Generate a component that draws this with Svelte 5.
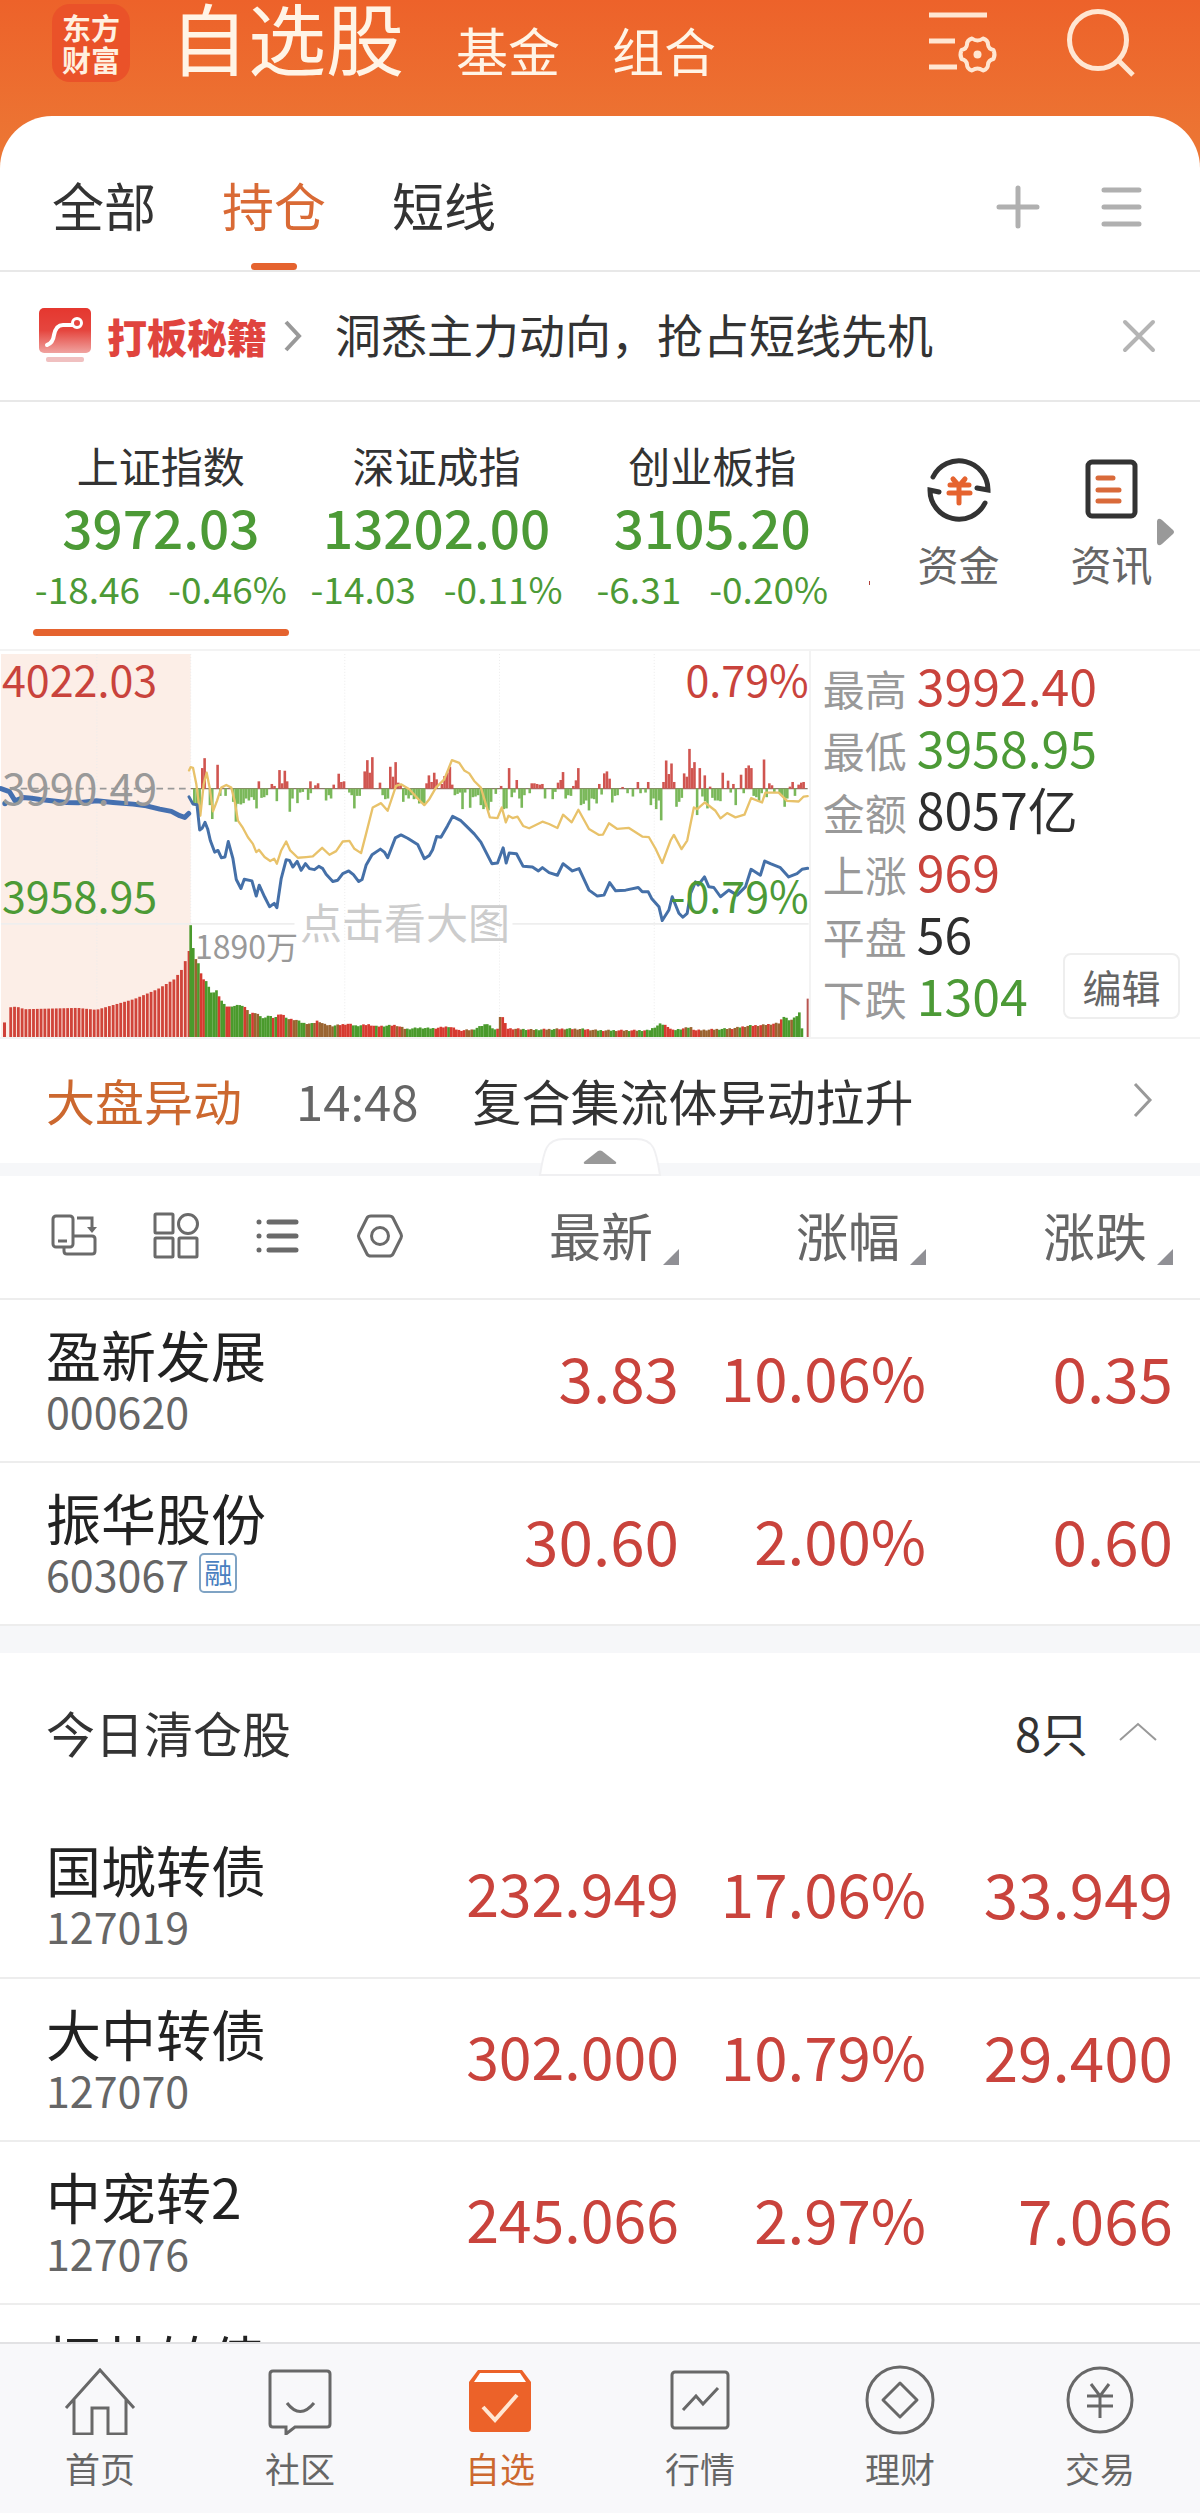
<script lang="ts">
  type Tone = 'up' | 'down' | 'flat';

  interface Stock {
    name: string;
    code: string;
    price: string;
    percent: string;
    change: string;
    margin?: boolean;
  }

  const markets = ['自选股', '基金', '组合'];
  const groups = ['全部', '持仓', '短线'];
  const columns = ['最新', '涨幅', '涨跌'];

  let market = $state('自选股');
  let group = $state('持仓');
  let activeIndex = $state('上证指数');
  let activeNav = $state('自选');
  let showBanner = $state(true);
  let showCleared = $state(true);

  const indices = [
    { name: '上证指数', value: '3972.03', change: '-18.46', percent: '-0.46%' },
    { name: '深证成指', value: '13202.00', change: '-14.03', percent: '-0.11%' },
    { name: '创业板指', value: '3105.20', change: '-6.31', percent: '-0.20%' },
  ];

  const stats: { label: string; value: string; tone: Tone }[] = [
    { label: '最高', value: '3992.40', tone: 'up' },
    { label: '最低', value: '3958.95', tone: 'down' },
    { label: '金额', value: '8057亿', tone: 'flat' },
    { label: '上涨', value: '969', tone: 'up' },
    { label: '平盘', value: '56', tone: 'flat' },
    { label: '下跌', value: '1304', tone: 'down' },
  ];

  const holdings: Stock[] = [
    { name: '盈新发展', code: '000620', price: '3.83', percent: '10.06%', change: '0.35' },
    { name: '振华股份', code: '603067', price: '30.60', percent: '2.00%', change: '0.60', margin: true },
  ];

  const cleared: Stock[] = [
    { name: '国城转债', code: '127019', price: '232.949', percent: '17.06%', change: '33.949' },
    { name: '大中转债', code: '127070', price: '302.000', percent: '10.79%', change: '29.400' },
    { name: '中宠转2', code: '127076', price: '245.066', percent: '2.97%', change: '7.066' },
    { name: '恒帅转债', code: '123256', price: '', percent: '', change: '' },
  ];

  const navItems = ['首页', '社区', '自选', '行情', '理财', '交易'];

  // chart geometry, in viewBox units
  const ZERO = 443;
  const BASE = 1194;
  const STEP = 7.75;

  const auctionLine =
    '3,443 28,452 45,480 70,470 95,472 120,476 155,480 200,485 235,486 290,480 340,485 400,490 440,495 480,505 515,512 540,525 555,530 567,518';

  const priceLine =
    '568,468 580,490 592,492 600,568 608,562 616,545 624,565 632,600 645,635 655,630 665,652 676,650 686,603 700,655 710,718 724,745 734,717 757,722 770,768 779,735 795,770 810,800 824,790 832,803 845,715 860,658 870,660 880,680 893,663 905,690 918,670 930,685 945,688 958,678 970,685 980,702 1000,724 1015,720 1030,700 1048,692 1062,703 1078,724 1088,718 1100,675 1118,643 1143,626 1155,635 1165,652 1188,592 1205,583 1225,593 1255,612 1275,655 1290,645 1300,628 1312,588 1325,590 1345,555 1360,527 1385,540 1400,555 1425,580 1445,605 1478,670 1495,668 1512,622 1521,668 1530,638 1552,640 1572,678 1600,680 1618,692 1630,682 1650,697 1675,705 1692,670 1720,692 1740,685 1770,750 1795,768 1815,765 1832,727 1850,752 1880,750 1918,742 1930,755 1948,755 1958,775 1980,800 1990,842 2010,810 2020,770 2040,820 2052,832 2065,820 2075,760 2090,725 2098,735 2117,710 2130,740 2145,742 2165,770 2190,750 2215,765 2240,740 2257,687 2285,705 2298,662 2315,670 2345,682 2370,710 2395,700 2410,687 2427,684';

  const leadLine =
    '568,388 573,378 580,380 590,430 602,525 612,430 621,395 630,440 640,512 652,480 665,440 680,432 695,440 705,480 715,540 730,562 745,590 760,610 770,635 778,628 795,650 812,662 824,655 832,670 845,630 860,603 872,630 895,652 920,650 940,648 968,622 990,643 1010,632 1030,603 1050,601 1065,625 1085,638 1100,580 1120,500 1145,487 1165,510 1190,435 1205,430 1230,445 1258,476 1275,493 1290,475 1310,440 1335,415 1358,357 1380,365 1395,388 1410,397 1425,420 1445,440 1460,490 1472,530 1495,532 1508,500 1520,545 1528,525 1540,532 1555,528 1572,556 1590,563 1630,543 1650,550 1675,562 1692,522 1718,545 1738,507 1770,565 1800,583 1812,582 1830,548 1855,565 1890,562 1930,588 1950,590 1970,625 1990,668 2015,600 2025,583 2048,626 2065,600 2085,500 2095,505 2118,485 2150,510 2165,533 2185,517 2210,530 2237,522 2257,472 2290,485 2300,455 2340,455 2365,480 2400,482 2415,467 2427,466';

  const buyBars = parse(
    '608:62 615:92 654:72 778:22 817:14 825:8 840:56 848:16 856:54 863:22 933:22 948:10 956:16 1003:12 1018:45 1026:20 1034:22 1096:52 1104:86 1111:48 1119:95 1142:18 1173:66 1181:36 1189:80 1197:18 1204:12 1282:16 1289:40 1297:20 1305:48 1312:28 1328:14 1336:38 1344:48 1352:66 1359:12 1506:8 1530:62 1553:26 1598:16 1606:16 1614:14 1622:12 1630:14 1677:18 1685:26 1692:50 1723:8 1731:25 1738:62 1801:14 1816:46 1824:52 1832:30 1871:5 1917:20 1948:20 1994:20 2002:85 2010:44 2018:76 2026:20 2056:46 2064:36 2072:120 2080:62 2087:80 2103:62 2118:40 2134:6 2172:48 2188:24 2204:14 2227:42 2242:62 2250:70 2258:62 2296:88 2312:16 2320:10 2374:6 2382:20 2400:12 2408:18 2415:20'
  );

  const sellBars = parse(
    '584:50 592:50 600:70 631:50 638:92 662:22 678:22 701:40 709:100 716:46 724:48 732:44 740:30 748:36 756:26 764:34 771:60 786:28 794:26 802:20 832:38 871:70 879:30 894:44 902:12 910:10 926:34 934:14 980:36 988:20 995:30 1050:12 1057:20 1065:60 1073:22 1081:22 1150:20 1158:32 1166:30 1212:40 1220:20 1228:30 1236:20 1244:32 1252:30 1260:45 1268:42 1275:48 1367:20 1375:16 1383:12 1390:62 1398:12 1413:58 1421:26 1429:24 1437:20 1445:50 1453:62 1460:55 1468:66 1476:40 1490:16 1514:62 1522:60 1538:26 1546:12 1561:30 1568:58 1576:20 1592:14 1638:30 1661:32 1669:10 1700:30 1708:20 1716:22 1746:50 1754:46 1762:36 1770:66 1778:30 1786:32 1793:45 1808:18 1840:42 1848:22 1856:20 1886:14 1902:24 1925:14 1940:12 1956:50 1964:30 1972:62 1980:36 1987:96 2033:55 2041:40 2049:28 2095:80 2111:24 2119:38 2126:60 2141:28 2149:36 2157:36 2165:38 2196:12 2211:50 2235:14 2265:22 2273:26 2281:40 2289:14 2304:26 2327:10 2343:14 2350:22 2358:55 2366:30 2389:22'
  );

  const auctionVolume = parse('28:90 45:92 70:84 230:88 285:82 330:95 400:115 470:145 520:175 545:208 563:260');
  const tradeVolume = parse(
    '573:338 584:240 592:232 600:215 608:170 615:178 624:160 632:140 640:125 647:150 655:130 662:115 680:92 700:92 715:98 735:92 750:70 770:75 785:58 800:58 808:70 820:55 835:66 848:72 860:56 890:52 910:42 940:40 955:50 975:38 1000:34 1045:40 1070:34 1110:38 1130:32 1190:36 1220:24 1260:28 1300:26 1350:32 1380:20 1420:22 1467:42 1480:24 1498:24 1505:78 1514:50 1525:26 1600:22 1700:25 1750:24 1800:20 1950:20 1985:40 2005:34 2020:20 2075:30 2090:20 2200:26 2250:34 2290:36 2340:42 2358:66 2370:48 2390:60 2405:78 2411:10'
  );

  // one letter per minute bar: r = rising, g = falling, m = mixed
  const volumeTones =
    'ggmgrrgggggrggrrgggggrmgrmmgggggrgrrrgmrmmgggmmgmrmmmmmmgmrrrrrggggrrrrrgrrgggrrmrmmgggggggggggrrrrrgrrrrrrmmmgggggggggrmrrrrrmrmggrmmgggrmmggmrrmggrmmmgrrmmmggrmmggmrrmmgrrmggrgggggggrrrrgggrmgmrrrmmmmrmmgggmmrmmgrmmgrrmrmmrmrmmrgggmgggggmmmrrrrrrrr';

  const auctionBars = Array.from({ length: 48 }, (_, i) => {
    const x = 28 + i * 11.4;
    return { x, h: valueAt(auctionVolume, x) };
  });

  const volumeBars = Array.from({ length: 238 }, (_, i) => {
    const x = 573 + i * STEP;
    const jitter = i > 20 ? ((i * 7) % 5) - 2 : 0;
    return { x, h: valueAt(tradeVolume, x) + jitter, tone: volumeTones[i] ?? 'r' };
  });

  function parse(text: string) {
    return text.split(' ').map((pair) => {
      const [x, h] = pair.split(':').map(Number);
      return { x, h };
    });
  }

  function valueAt(points: { x: number; h: number }[], x: number) {
    const next = points.findIndex((p) => p.x >= x);
    if (next === -1) return points[points.length - 1].h;
    if (next === 0) return points[0].h;
    const a = points[next - 1];
    const b = points[next];
    return a.h + ((b.h - a.h) * (x - a.x)) / (b.x - a.x);
  }
</script>

{#snippet stockRows(rows: Stock[])}
  {#each rows as stock}
    <tr>
      <td class="stock">
        <div class="stock-name">{stock.name}</div>
        <div class="stock-code">
          {stock.code}
          {#if stock.margin}<span class="badge">融</span>{/if}
        </div>
      </td>
      <td class="quote" class:long={stock.price.length > 6}>{stock.price}</td>
      <td class="quote percent">{stock.percent}</td>
      <td class="quote">{stock.change}</td>
    </tr>
  {/each}
{/snippet}

<div class="app">
  <header>
    <div class="logo"><span>东方</span><span>财富</span></div>
    <nav class="markets">
      {#each markets as name}
        <button class:current={market === name} onclick={() => (market = name)}>{name}</button>
      {/each}
    </nav>
    <div class="header-actions">
      <button aria-label="列表设置">
        <svg width="70" height="64" viewBox="0 0 70 64" fill="none" stroke="#ffe6d2" stroke-width="5">
          <path d="M1 4h58M1 30h26M1 56h28" />
          <path
            stroke-width="4"
            stroke-linejoin="round"
            d="M44 27.500q5.500 4 11 0q5 1.500 5 6q.5 4.500 5.500 5.500q2 4.500 0 9q-5 1-5.500 5.500q0 4.500-5 6q-5.500-4-11 0q-5-1.500-5-6q-.5-4.500-5.500-5.500q-2-4.500 0-9q5-1 5.500-5.500q0-4.500 5-6z"
          />
          <circle cx="49.500" cy="43.500" r="4" fill="#ffe6d2" stroke="none" />
        </svg>
      </button>
      <button aria-label="搜索">
        <svg width="70" height="70" viewBox="0 0 70 70" fill="none" stroke="#ffe6d2" stroke-width="5">
          <circle cx="32" cy="32" r="28.500" />
          <path d="M52 52l15 15" />
        </svg>
      </button>
    </div>
  </header>

  <main>
    <div class="groups">
      {#each groups as name}
        <button class="group" class:current={group === name} onclick={() => (group = name)}>{name}</button>
      {/each}
      <div class="group-actions">
        <button aria-label="添加">
          <svg width="44" height="44" viewBox="0 0 44 44" stroke="#b0b0b0" stroke-width="5" stroke-linecap="round">
            <path d="M22 3v38M3 22h38" />
          </svg>
        </button>
        <button aria-label="管理分组">
          <svg width="42" height="44" viewBox="0 0 42 44" stroke="#b0b0b0" stroke-width="5" stroke-linecap="round">
            <path d="M4 5h35M4 22h35M4 39h35" />
          </svg>
        </button>
      </div>
    </div>

    {#if showBanner}
      <div class="banner">
        <a href="#guide" class="guide">
          <svg width="52" height="56" viewBox="0 0 52 56">
            <defs>
              <linearGradient id="guide-fill" x1="0" y1="0" x2="0" y2="1">
                <stop offset="0" stop-color="#e5372f" />
                <stop offset="0.500" stop-color="#e5463f" />
                <stop offset="1" stop-color="#f0a3a0" />
              </linearGradient>
            </defs>
            <rect width="52" height="45" rx="5" fill="url(#guide-fill)" />
            <rect x="7" y="49" width="38" height="5" rx="2" fill="#f0c0c0" />
            <path d="M8 37q6-2 7-10q2-10 9-10h10" fill="none" stroke="#fff" stroke-width="4" stroke-linecap="round" />
            <circle cx="38" cy="15" r="4.500" fill="#e5463f" stroke="#fff" stroke-width="3" />
          </svg>
          <span>打板秘籍</span>
          <svg width="20" height="32" viewBox="0 0 20 32" fill="none" stroke="#999" stroke-width="4">
            <path d="M3 2l13 14L3 30" />
          </svg>
        </a>
        <p>洞悉主力动向，抢占短线先机</p>
        <button aria-label="关闭" onclick={() => (showBanner = false)}>
          <svg width="34" height="34" viewBox="0 0 34 34" stroke="#b4b4b4" stroke-width="4" stroke-linecap="round">
            <path d="M3 3l28 28M31 3L3 31" />
          </svg>
        </button>
      </div>
    {/if}

    <section class="indices">
      <div class="index-list">
        {#each indices as item}
          <button class="index" class:current={activeIndex === item.name} onclick={() => (activeIndex = item.name)}>
            <span class="index-name">{item.name}</span>
            <span class="index-value">{item.value}</span>
            <span class="index-change"><span>{item.change}</span><span>{item.percent}</span></span>
          </button>
        {/each}
      </div>
      <a class="shortcut" href="#funds">
        <svg width="66" height="66" viewBox="0 0 66 66" fill="none" stroke="#333" stroke-width="5" stroke-linecap="round">
          <path d="M7 20A29 29 0 0 1 62 33l-11 -2" />
          <path d="M59 46A29 29 0 0 1 4 33l9 2" />
          <path stroke="#e5632f" d="M27 22l6 7 6-7M24 28h19M23 36h21M33 29v17" />
        </svg>
        资金
      </a>
      <a class="shortcut" href="#news">
        <svg width="66" height="66" viewBox="0 0 66 66" fill="none" stroke="#333" stroke-width="5" stroke-linecap="round">
          <rect x="9" y="5" width="47" height="54" rx="4" />
          <path stroke="#d96a3a" d="M19 21h15M19 33h21M19 44h21" />
        </svg>
        资讯
      </a>
      <svg class="more" width="17" height="28" viewBox="0 0 17 28" fill="#999">
        <path d="M0 3q1-4 5-1l11 10q2 2 0 4L5 26q-4 3-5-1z" />
      </svg>
    </section>

    <section class="quote-panel">
      <button class="chart" aria-label="点击看大图">
        <svg viewBox="0 27 2430 1167" preserveAspectRatio="none" aria-hidden="true">
          <rect x="3" y="36" width="570" height="1158" fill="#fceee7" />
          <path d="M291 36V1194M573 36V1194M1036 36V1194M1501 36V1194M1966 36V1194" stroke="#ececec" stroke-width="3" stroke-dasharray="3 6" />
          <path d="M3 852H885M1540 852H2430" stroke="#eee" stroke-width="5" />
          <path d="M62 443H570" stroke="#999" stroke-width="5" stroke-dasharray="20 14" />
          <path d="M573 443H2427" stroke="#8a7a6a" stroke-width="4" />
          {#each sellBars as bar}
            <rect x={bar.x - 4} y={ZERO} width="7.750" height={bar.h} fill="#7ab85a" />
          {/each}
          {#each buyBars as bar}
            <rect x={bar.x - 4} y={ZERO - bar.h} width="7.750" height={bar.h} fill="#d05550" />
          {/each}
          <rect x="9" y={BASE - 44} width="9" height="44" fill="#cf4038" />
          {#each auctionBars as bar}
            <rect x={bar.x} y={BASE - bar.h} width="8.500" height={bar.h} fill="#d0443a" />
          {/each}
          {#each volumeBars as bar}
            <rect
              x={bar.x - 4}
              y={BASE - bar.h}
              width="8"
              height={bar.h}
              fill={bar.tone === 'g' ? '#4a9a2c' : bar.tone === 'm' ? '#9a6430' : '#d63a30'}
            />
          {/each}
          <path d="M2427 1078V1194" stroke="#b85550" stroke-width="6" />
          <g fill="none" stroke-linejoin="round" stroke-linecap="round">
            <polyline points={leadLine} stroke="#e8c26a" stroke-width="7" />
            <polyline points={auctionLine} stroke="#4570b0" stroke-width="15" />
            <path d="M15 488v0" stroke="#4570b0" stroke-width="16" />
            <polyline points={priceLine} stroke="#4570a8" stroke-width="9" />
          </g>
        </svg>
        <span class="axis top up">4022.03</span>
        <span class="axis middle">3990.49</span>
        <span class="axis low down">3958.95</span>
        <span class="axis right top up">0.79%</span>
        <span class="axis right low down">-0.79%</span>
        <span class="volume-max">1890万</span>
        <span class="hint">点击看大图</span>
      </button>
      <div class="side">
        <dl>
          {#each stats as stat}
            <div>
              <dt>{stat.label}</dt>
              <dd class={stat.tone}>{stat.value}</dd>
            </div>
          {/each}
        </dl>
        <button class="edit">编辑</button>
      </div>
    </section>

    <a class="alert" href="#alerts">
      <strong>大盘异动</strong>
      <time>14:48</time>
      <span>复合集流体异动拉升</span>
      <svg width="22" height="36" viewBox="0 0 22 36" fill="none" stroke="#999" stroke-width="3">
        <path d="M3 2l15 16L3 34" />
      </svg>
    </a>

    <div class="divider">
      <button class="fold" aria-label="收起">
        <svg width="124" height="38" viewBox="0 0 124 38">
          <path d="M2 37C6 12 8 1 26 1H98C116 1 118 12 122 37z" fill="#fff" stroke="#f0f0f2" stroke-width="2" />
          <path d="M46 24L60 13q2-1 4 0L78 24q1 2-2 2H48q-3 0-2-2z" fill="#999" />
        </svg>
      </button>
    </div>

    <table>
      <colgroup>
        <col />
        <col class="col" />
        <col class="col" />
        <col class="col-last" />
      </colgroup>
      <thead>
        <tr>
          <th class="tools">
            <div>
              <button aria-label="横屏">
                <svg width="48" height="48" viewBox="0 0 48 48" fill="none" stroke="#6a6a6a" stroke-width="3">
                  <rect x="3" y="4" width="20" height="31" rx="3" />
                  <path d="M8 29h9M27 6h15v12M14 35v4q0 3 3 3h25q3 0 3-3V27q0-3-3-3H23" />
                  <path d="M37 15h10l-5 6z" fill="#6a6a6a" stroke="none" />
                </svg>
              </button>
              <button aria-label="宫格">
                <svg width="48" height="48" viewBox="0 0 48 48" fill="none" stroke="#6a6a6a" stroke-width="3">
                  <rect x="3" y="2" width="18" height="19" rx="1" />
                  <circle cx="36" cy="12" r="9.500" />
                  <rect x="3" y="26" width="18" height="19" rx="1" />
                  <rect x="27" y="26" width="18" height="19" rx="1" />
                </svg>
              </button>
              <button aria-label="列表">
                <svg width="48" height="48" viewBox="0 0 48 48" stroke="#6a6a6a" stroke-width="5" stroke-linecap="round">
                  <path d="M5 10v0M5 24v0M5 38v0M15 10h27M15 24h27M15 38h27" />
                </svg>
              </button>
              <button aria-label="设置">
                <svg width="48" height="48" viewBox="0 0 48 48" fill="none" stroke="#6a6a6a" stroke-width="3">
                  <path d="M15 4H33q3 0 4 2l8 16q1 2 0 4l-8 16q-1 2-4 2H15q-3 0-4-2L3 26q-1-2 0-4L11 6q1-2 4-2z" />
                  <circle cx="24" cy="24" r="8.500" />
                </svg>
              </button>
            </div>
          </th>
          {#each columns as column}
            <th>
              <button class="sort">
                {column}
                <svg width="16" height="16" viewBox="0 0 16 16" fill="#909095"><path d="M16 0v16H0z" /></svg>
              </button>
            </th>
          {/each}
        </tr>
      </thead>
      <tbody>
        {@render stockRows(holdings)}
      </tbody>
    </table>

    <div class="band"></div>

    <button class="section-title" onclick={() => (showCleared = !showCleared)}>
      <span>今日清仓股</span>
      <span class="count">8只</span>
      <svg width="40" height="20" viewBox="0 0 40 20" fill="none" stroke="#999" stroke-width="2">
        <path d="M2 18L20 2l18 16" />
      </svg>
    </button>

    {#if showCleared}
      <table>
        <colgroup>
          <col />
          <col class="col" />
          <col class="col" />
          <col class="col-last" />
        </colgroup>
        <tbody>
          {@render stockRows(cleared)}
        </tbody>
      </table>
    {/if}
  </main>

  <nav class="bottom-nav">
    {#each navItems as item, i}
      <button class:current={activeNav === item} onclick={() => (activeNav = item)}>
        <svg width="72" height="70" viewBox="0 0 72 70" fill="none" stroke="#686868" stroke-width="3">
          {#if i === 0}
            <path d="M2 43L36 5l34 38M10 35v34h18V43h16v26h18V35" />
          {:else if i === 1}
            <path d="M9 6h54q3 0 3 3v50q0 3-3 3H31l-9 7v-7H9q-3 0-3-3V9q0-3 3-3z" />
            <path d="M23 38q13 17 27 0" />
          {:else if i === 2}
            <path d="M5 17L14 5H58L67 17V63q0 4-4 4H9q-4 0-4-4z" fill="#ec6229" stroke="none" />
            <path d="M16 8H56L62 17H10z" fill="#fff" stroke="none" />
            <path d="M19 42l12 13L53 30" stroke="#ffe6d2" stroke-width="4" />
          {:else if i === 3}
            <rect x="8" y="7" width="56" height="56" rx="3" />
            <path d="M19 45l13-14 7 8 15-16" />
          {:else if i === 4}
            <circle cx="36" cy="35" r="33" />
            <path d="M36 18L53 35 36 52 19 35z" stroke-linejoin="round" />
          {:else}
            <circle cx="36" cy="35" r="32" />
            <path d="M27 19l9 12 9-12M23 31h26M23 41h26M36 31v22" />
          {/if}
        </svg>
        {item}
      </button>
    {/each}
  </nav>
</div>

<style>
  :global(body) {
    margin: 0;
  }

  .app {
    display: flex;
    flex-direction: column;
    height: 100vh;
    background: linear-gradient(#ed622a, #ec7634 150px);
    color: #333;
    font-family: 'Noto Sans CJK SC', sans-serif;
    font-size: 48px;
  }

  .app * {
    box-sizing: border-box;
  }

  svg {
    display: block;
    flex: none;
  }

  button {
    margin: 0;
    padding: 0;
    border: 0;
    background: none;
    color: inherit;
    font: inherit;
    cursor: pointer;
  }

  a {
    color: inherit;
    text-decoration: none;
  }

  .up {
    color: #c9433c;
  }

  .down {
    color: #4c9a36;
  }

  .flat {
    color: #2e2e2e;
  }

  /* header */
  header {
    display: flex;
    align-items: flex-start;
    flex: none;
    height: 116px;
    padding: 4px 64px 0 52px;
  }

  .logo {
    display: flex;
    flex-direction: column;
    align-items: center;
    justify-content: center;
    width: 78px;
    height: 78px;
    border-radius: 18px;
    background: #ea5229;
    color: #fff0e0;
    font-size: 29px;
    font-weight: 700;
    line-height: 32px;
  }

  .markets {
    display: flex;
    align-items: flex-end;
    gap: 52px;
    height: 72px;
    margin-left: 40px;
    color: #fff4e6;
    font-size: 52px;
    line-height: 52px;
  }

  .markets .current {
    padding-bottom: 2px;
    font-size: 78px;
    line-height: 76px;
  }

  .header-actions {
    display: flex;
    gap: 68px;
    margin-left: auto;
    padding-top: 4px;
  }

  main {
    flex: 1;
    min-height: 0;
    overflow: hidden;
    border-radius: 52px 52px 0 0;
    background: #fff;
  }

  /* group tabs */
  .groups {
    display: flex;
    gap: 66px;
    height: 156px;
    padding: 0 58px 0 52px;
    border-bottom: 2px solid #e8e8e8;
    font-size: 52px;
    line-height: 60px;
  }

  .group {
    position: relative;
    padding-top: 24px;
  }

  .group.current {
    color: #d96a35;
  }

  .group.current::after {
    content: '';
    position: absolute;
    bottom: 0;
    left: calc(50% - 23px);
    width: 46px;
    height: 7px;
    border-radius: 4px;
    background: #e5632f;
  }

  .group-actions {
    display: flex;
    align-items: center;
    gap: 60px;
    margin-left: auto;
    padding-top: 28px;
  }

  /* banner */
  .banner {
    display: flex;
    align-items: center;
    height: 130px;
    padding: 0 44px 0 39px;
    border-bottom: 2px solid #e8e8e8;
  }

  .guide {
    display: flex;
    align-items: center;
    gap: 16px;
    color: #e0443e;
    font-size: 40px;
    font-weight: 900;
    line-height: 48px;
  }

  .banner p {
    flex: 1;
    margin: 0 0 6px 32px;
    font-size: 46px;
    line-height: 56px;
  }

  /* indices */
  .indices {
    display: flex;
    position: relative;
    height: 247px;
    padding: 0 12px 0 23px;
  }

  .index-list {
    display: grid;
    position: relative;
    grid-template-columns: repeat(3, 1fr);
    flex: 1;
    max-width: 71%;
    margin-right: auto;
  }

  /* edge of the next index, cut off by the shortcuts */
  .index-list::after {
    content: '';
    position: absolute;
    top: 179px;
    right: -20px;
    width: 1px;
    height: 4px;
    background: #b0403a;
  }

  .index {
    display: flex;
    position: relative;
    flex-direction: column;
    align-items: center;
    padding-top: 38px;
  }

  .index.current::after {
    content: '';
    position: absolute;
    bottom: 13px;
    left: 10px;
    right: 10px;
    height: 7px;
    border-radius: 4px;
    background: #e5632f;
  }

  .index-name {
    font-size: 42px;
    line-height: 50px;
  }

  .index-value {
    margin-top: 4px;
    color: #4c9a36;
    font-size: 53px;
    font-weight: 500;
    line-height: 64px;
  }

  .index-change {
    display: flex;
    gap: 28px;
    margin-top: 10px;
    color: #4c9a36;
    font-size: 37px;
    line-height: 40px;
  }

  .shortcut {
    display: flex;
    flex-direction: column;
    align-items: center;
    gap: 16px;
    width: 153px;
    padding-top: 55px;
    color: #666;
    font-size: 41px;
    line-height: 48px;
  }

  .more {
    position: absolute;
    top: 116px;
    right: 26px;
  }

  /* chart and stats */
  .quote-panel {
    display: flex;
    height: 390px;
    border-top: 2px solid #f3f3f3;
    border-bottom: 2px solid #f3f3f3;
  }

  .chart {
    position: relative;
    flex: 27;
    border-right: 2px solid #f3f3f3;
  }

  .chart svg {
    width: 100%;
    height: 100%;
  }

  .axis {
    position: absolute;
    left: 2px;
    font-size: 43px;
    line-height: 50px;
  }

  .axis.right {
    left: auto;
    right: 0;
  }

  .axis.top {
    top: 2px;
  }

  .axis.middle {
    top: 110px;
    color: #999;
  }

  .axis.low {
    top: 218px;
  }

  .volume-max {
    position: absolute;
    top: 276px;
    left: 195px;
    color: #999;
    font-size: 32px;
    line-height: 36px;
  }

  .hint {
    position: absolute;
    top: 245px;
    left: 300px;
    color: #ccc;
    font-size: 42px;
    line-height: 50px;
  }

  .side {
    position: relative;
    flex: 13;
  }

  dl {
    margin: 0;
    padding: 2px 0 0 12px;
  }

  dl div {
    display: flex;
    align-items: baseline;
    gap: 10px;
    height: 62px;
    line-height: 62px;
  }

  dt {
    color: #999;
    font-size: 42px;
  }

  dd {
    margin: 0;
    font-size: 50px;
  }

  .edit {
    position: absolute;
    right: 20px;
    bottom: 18px;
    width: 117px;
    height: 66px;
    border: 2px solid #eee;
    border-radius: 8px;
    background: #fff;
    color: #666;
    font-size: 39px;
    line-height: 56px;
  }

  /* market alert */
  .alert {
    display: flex;
    align-items: center;
    height: 124px;
    padding: 0 46px 3px;
    font-size: 49px;
    line-height: 60px;
  }

  .alert strong {
    color: #cc682f;
    font-weight: 400;
  }

  .alert time {
    margin: 0 54px;
    color: #666;
  }

  .alert svg {
    margin-left: auto;
  }

  .divider {
    position: relative;
    height: 13px;
    background: #f6f7f9;
  }

  .fold {
    position: absolute;
    bottom: 0;
    left: calc(50% - 62px);
  }

  /* stock tables */
  table {
    width: 100%;
    border-collapse: collapse;
    table-layout: fixed;
  }

  .col {
    width: 247px;
  }

  .col-last {
    width: 274px;
  }

  th {
    height: 123px;
    padding: 0 0 2px;
    border-bottom: 2px solid #ededed;
    font-weight: 400;
    text-align: right;
  }

  .tools div {
    display: flex;
    gap: 54px;
    padding-left: 50px;
  }

  .sort {
    display: inline-flex;
    align-items: flex-end;
    gap: 10px;
    color: #666;
    font-size: 52px;
    line-height: 60px;
  }

  td {
    height: 163px;
    padding: 0 0 9px;
    border-bottom: 2px solid #ededed;
  }

  th:last-child,
  td:last-child {
    padding-right: 27px;
  }

  .stock {
    padding-left: 46px;
  }

  .stock-name {
    color: #222;
    font-size: 55px;
    line-height: 64px;
    white-space: nowrap;
  }

  .stock-code {
    display: flex;
    align-items: center;
    gap: 10px;
    margin-top: 3px;
    color: #666;
    font-size: 43px;
    line-height: 44px;
  }

  .badge {
    height: 40px;
    padding: 0 3px;
    border: 2px solid #7fa3c4;
    border-radius: 5px;
    color: #4a7fc0;
    font-size: 28px;
    line-height: 34px;
  }

  .quote {
    color: #c9433c;
    font-size: 62px;
    line-height: 70px;
    text-align: right;
  }

  .quote.percent {
    font-size: 60px;
  }

  .quote.long {
    font-size: 59px;
  }

  .band {
    height: 27px;
    background: #f6f7f9;
  }

  .section-title {
    display: flex;
    align-items: center;
    width: 100%;
    height: 162px;
    padding: 0 42px 4px 46px;
    font-size: 49px;
    line-height: 60px;
  }

  .count {
    margin-left: auto;
    margin-right: 30px;
    font-size: 47px;
  }

  /* bottom navigation */
  .bottom-nav {
    display: grid;
    grid-template-columns: repeat(6, 1fr);
    flex: none;
    height: 171px;
    border-top: 2px solid #e2e2e4;
    background: #f8f8fa;
    color: #666;
    font-size: 35px;
    line-height: 40px;
  }

  .bottom-nav button {
    display: flex;
    flex-direction: column;
    align-items: center;
    gap: 13px;
    padding-top: 21px;
  }

  .bottom-nav .current {
    color: #cc682f;
  }
</style>
